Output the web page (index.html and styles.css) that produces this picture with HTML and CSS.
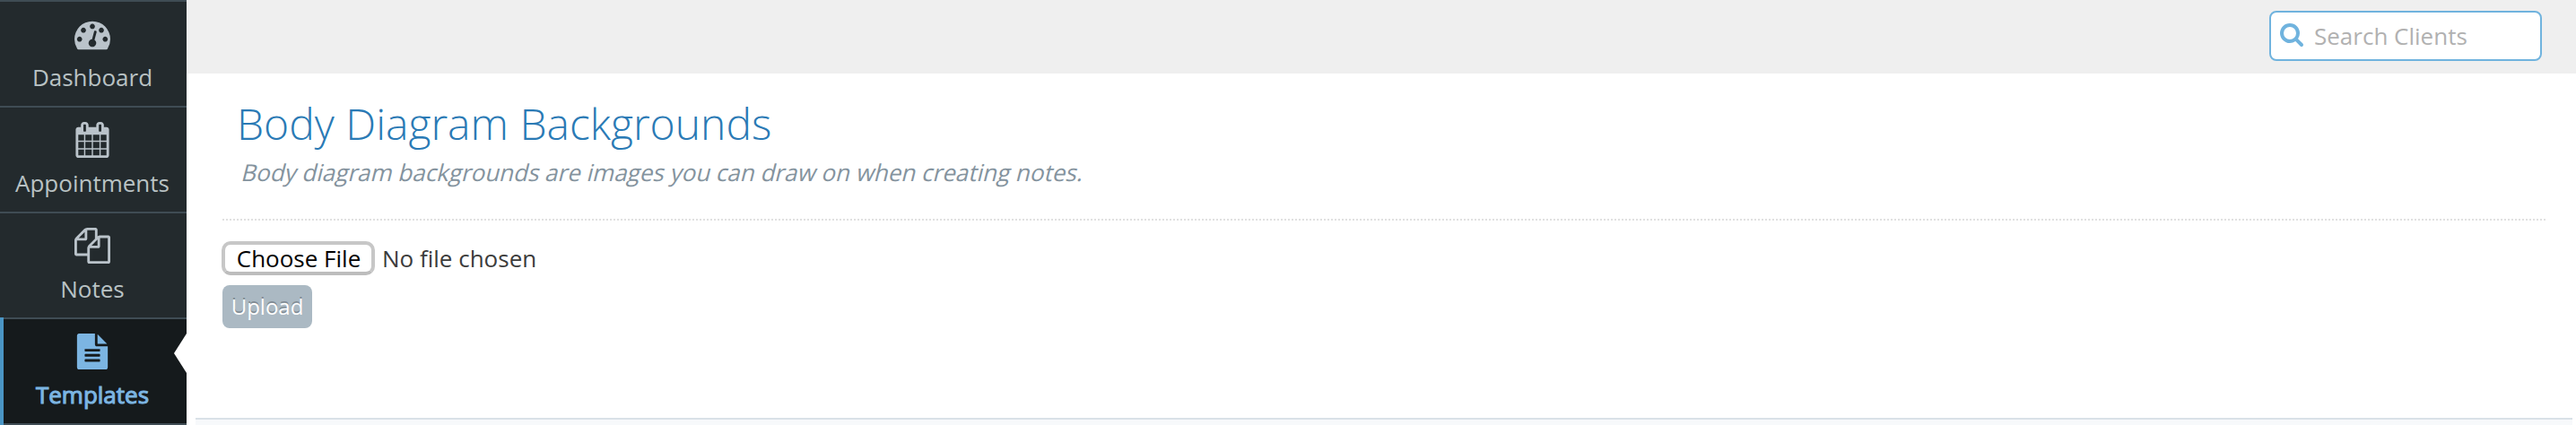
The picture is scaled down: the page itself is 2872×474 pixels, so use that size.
FILE: index.html
```html
<!DOCTYPE html>
<html lang="en">
<head>
<meta charset="utf-8">
<title>Body Diagram Backgrounds</title>
<link rel="stylesheet" href="styles.css">
</head>
<body>
<div class="app">
  <nav class="sidebar">
    <a class="nav-item">
      <svg class="nav-icon" viewBox="0 0 1792 1792"><path d="M384 1152q0-53-37.5-90.5t-90.5-37.5-90.5 37.5-37.5 90.5 37.5 90.5 90.5 37.5 90.5-37.5 37.5-90.5zm192-448q0-53-37.5-90.5t-90.5-37.5-90.5 37.5-37.5 90.5 37.5 90.5 90.5 37.5 90.5-37.5 37.5-90.5zm428 481l101-382q6-26-7.5-48.5t-38.5-29.5-48 6.5-30 39.5l-101 382q-60 5-107 43.5t-63 98.5q-20 77 20 146t117 89 146-20 89-117q16-60-6-117t-72-91zm660-33q0-53-37.5-90.5t-90.5-37.5-90.5 37.5-37.5 90.5 37.5 90.5 90.5 37.5 90.5-37.5 37.5-90.5zm-640-640q0-53-37.5-90.5t-90.5-37.5-90.5 37.5-37.5 90.5 37.5 90.5 90.5 37.5 90.5-37.5 37.5-90.5zm448 192q0-53-37.5-90.5t-90.5-37.5-90.5 37.5-37.5 90.5 37.5 90.5 90.5 37.5 90.5-37.5 37.5-90.5zm320 448q0 261-141 483-19 29-54 29h-1402q-35 0-54-29-141-221-141-483 0-182 71-348t191-286 286-191 348-71 348 71 286 191 191 286 71 348z"/></svg>
      <span class="nav-label">Dashboard</span>
    </a>
    <a class="nav-item">
      <svg class="nav-icon" viewBox="0 0 1792 1792"><path d="M192 1664h288v-288h-288v288zm352 0h320v-288h-320v288zm-352-352h288v-320h-288v320zm352 0h320v-320h-320v320zm-352-384h288v-288h-288v288zm736 736h320v-288h-320v288zm-384-736h320v-288h-320v288zm768 736h288v-288h-288v288zm-384-352h320v-320h-320v320zm-352-864v-288q0-13-9.5-22.5t-22.5-9.5h-64q-13 0-22.5 9.5t-9.5 22.5v288q0 13 9.5 22.5t22.5 9.5h64q13 0 22.5-9.5t9.5-22.5zm736 864h288v-320h-288v320zm-384-384h320v-288h-320v288zm384 0h288v-288h-288v288zm32-480v-288q0-13-9.5-22.5t-22.5-9.5h-64q-13 0-22.5 9.5t-9.5 22.5v288q0 13 9.5 22.5t22.5 9.5h64q13 0 22.5-9.5t9.5-22.5zm384-64v1280q0 52-38 90t-90 38h-1408q-52 0-90-38t-38-90v-1280q0-52 38-90t90-38h128v-96q0-66 47-113t113-47h64q66 0 113 47t47 113v96h384v-96q0-66 47-113t113-47h64q66 0 113 47t47 113v96h128q52 0 90 38t38 90z"/></svg>
      <span class="nav-label">Appointments</span>
    </a>
    <a class="nav-item">
      <svg class="nav-icon" viewBox="0 0 1792 1792"><path d="M1696 384q40 0 68 28t28 68v1216q0 40-28 68t-68 28h-960q-40 0-68-28t-28-68v-288h-544q-40 0-68-28t-28-68v-672q0-40 20-88t48-76l408-408q28-28 76-48t88-20h416q40 0 68 28t28 68v328q68-40 128-40h416zm-544 213l-299 299h299v-299zm-640-384l-299 299h299v-299zm196 647l316-316v-416h-384v416q0 40-28 68t-68 28h-416v640h512v-256q0-40 20-88t48-76zm956 804v-1152h-384v416q0 40-28 68t-68 28h-416v640h896z"/></svg>
      <span class="nav-label">Notes</span>
    </a>
    <a class="nav-item nav-item-active">
      <svg class="nav-icon" viewBox="0 0 1792 1792"><path d="M1596 476q14 14 28 36h-472v-472q22 14 36 28zm-476 164h544v1056q0 40-28 68t-68 28h-1344q-40 0-68-28t-28-68v-1600q0-40 28-68t68-28h800v544q0 40 28 68t68 28zm160 736v-64q0-14-9-23t-23-9h-704q-14 0-23 9t-9 23v64q0 14 9 23t23 9h704q14 0 23-9t9-23zm0-256v-64q0-14-9-23t-23-9h-704q-14 0-23 9t-9 23v64q0 14 9 23t23 9h704q14 0 23-9t9-23zm0-256v-64q0-14-9-23t-23-9h-704q-14 0-23 9t-9 23v64q0 14 9 23t23 9h704q14 0 23-9t9-23z"/></svg>
      <span class="nav-label">Templates</span>
    </a>
  </nav>
  <div class="main">
    <header class="topbar">
      <label class="search">
        <svg class="search-icon" viewBox="0 0 1792 1792"><path d="M1216 832q0-185-131.5-316.5t-316.5-131.5-316.5 131.5-131.5 316.5 131.5 316.5 316.5 131.5 316.5-131.5 131.5-316.5zm512 832q0 52-38 90t-90 38q-54 0-90-38l-343-342q-179 124-399 124-143 0-273.5-55.5t-225-150-150-225-55.5-273.5 55.5-273.5 150-225 225-150 273.5-55.5 273.5 55.5 225 150 150 225 55.5 273.5q0 220-124 399l343 343q37 37 37 90z"/></svg>
        <input class="search-input" type="text" placeholder="Search Clients">
      </label>
    </header>
    <main class="content">
      <h1 class="title">Body Diagram Backgrounds</h1>
      <p class="subtitle">Body diagram backgrounds are images you can draw on when creating notes.</p>
      <div class="divider"></div>
      <div class="file-row">
        <button class="file-button">Choose File</button>
        <span class="file-name">No file chosen</span>
      </div>
      <button class="upload">Upload</button>
    </main>
    <footer class="footer"></footer>
  </div>
</div>
</body>
</html>
```
FILE: styles.css
```css
* { box-sizing: border-box; }
body {
  margin: 0;
  background: #fff;
  font-family: "Open Sans", sans-serif;
  font-size: 26px;
  line-height: 36px;
}
button, input { font: inherit; }
.app { display: flex; height: 474px; overflow: hidden; }

.sidebar {
  width: 208px;
  flex: none;
  background: #232a2d;
  border-bottom: 2px solid #3f4c54;
}
.nav-item {
  position: relative;
  display: flex;
  flex-direction: column;
  align-items: center;
  height: 118px;
  padding: 15.5px 2px 0 0;
  border-top: 2px solid #3f4c54;
  color: #b9c2c4;
}
.nav-icon { width: 40px; height: 40px; fill: #bac3ca; }
.nav-label { margin-top: 10.5px; }
.nav-item-active { background: #151a1c; color: #7cb5e2; -webkit-text-stroke: 1.1px #7cb5e2; }
.nav-item-active .nav-icon { fill: #7cb5e2; }
.nav-item-active::before {
  content: "";
  position: absolute;
  left: 0;
  top: -2px;
  width: 4px;
  height: 120px;
  background: #4a95c4;
}
.nav-item-active::after {
  content: "";
  position: absolute;
  right: 0;
  top: 16px;
  width: 14px;
  height: 44px;
  background: #fff;
  clip-path: polygon(100% 0, 0 50%, 100% 100%);
}

.main { flex: 1; display: flex; flex-direction: column; }
.topbar {
  display: flex;
  justify-content: flex-end;
  height: 82px;
  padding: 12px 38px 0 0;
  background: #efefef;
}
.search {
  display: flex;
  width: 304px;
  height: 56px;
  padding: 8px 9px;
  background: #fff;
  border: 2px solid #70b3de;
  border-radius: 8px;
}
.search-icon { flex: none; width: 28px; height: 28px; margin-top: 2px; fill: #70b3de; }
.search-input {
  width: 220px;
  height: 36px;
  margin-left: 11px;
  padding: 0;
  border: 0;
  outline: 0;
  background: none;
}
.search-input::placeholder { color: #b1b1b1; opacity: 1; }

.content { flex: 1; padding: 25px 34px 0 40px; }
.title {
  margin: 0 0 0 16px;
  color: #2a7ab5;
  font-size: 48px;
  font-weight: 300;
  line-height: 62px;
}
.subtitle {
  width: max-content;
  margin: 5px 0 0 20px;
  color: #84939e;
  transform: skewX(-14deg);
  transform-origin: 0 28px;
}
.divider {
  height: 2px;
  margin-top: 34px;
  background: repeating-linear-gradient(90deg, #e0e0e0 0 2px, transparent 2px 4px);
}
.file-row { display: flex; gap: 8px; margin-top: 23px; color: #3c3c3c; }
.file-button {
  width: 171px;
  height: 38px;
  margin-left: -1px;
  padding: 0 0 0 1px;
  line-height: 30px;
  color: #000;
  background: #fff;
  border: 4px solid #c7c7c7;
  border-bottom-color: #bdbdbd;
  border-radius: 10px;
}
.file-name { margin-top: 1px; }
.upload {
  display: block;
  width: 100px;
  height: 48px;
  margin-top: 11px;
  padding: 0 0 1px;
  border: 0;
  border-radius: 8px;
  background: #abb9c3;
  color: #fff;
  font-size: 24px;
  text-shadow: 0 -2px 0 rgba(0, 0, 0, .25);
}
.footer {
  height: 8px;
  margin: 0 4px 0 10px;
  background: #f7f9fb;
  border-top: 2px solid #d9e1e7;
}
```
